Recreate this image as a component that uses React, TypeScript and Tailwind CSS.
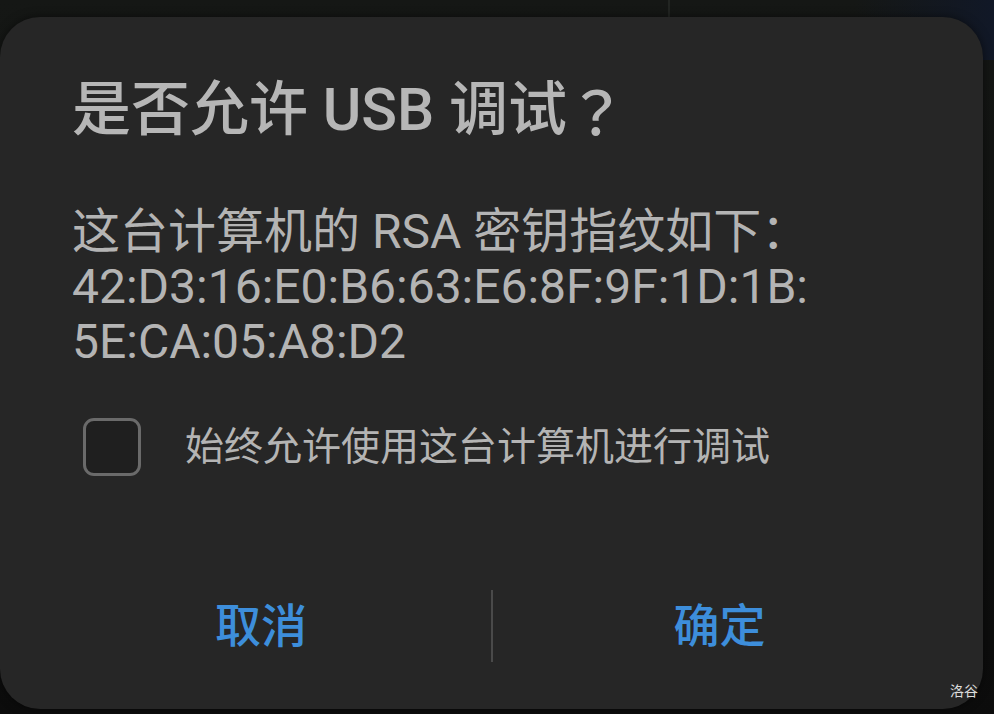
const font = { fontFamily: 'Roboto, "Noto Sans CJK SC", sans-serif' };

function Checkbox() {
  return (
    <div className="w-[58px] h-[58px] shrink-0 rounded-[11px] border-[3px] border-[#6a6a6a] bg-[#1f1f1f]" />
  );
}

export default function App() {
  return (
    <div
      className="relative w-[994px] h-[714px] overflow-hidden bg-gradient-to-b from-[#151715] to-[#0c0c0c] pt-[17px]"
      style={font}
    >
      <div className="absolute left-[668px] top-0 h-[17px] w-[2px] bg-[#222522]" />
      <div className="absolute right-0 top-0 h-[60px] w-[140px] bg-gradient-to-l from-[#111827] to-transparent" />

      <div className="relative flex h-[692px] w-[983px] flex-col rounded-[40px] bg-[#262626] shadow-[0_0_10px_rgba(0,0,0,0.5)]">
        <h1 className="flex h-[64px] items-center pl-[72px] mt-[61px] text-[59px] font-medium leading-[64px] text-[#b6b6b6] whitespace-pre">
          是否允许 USB 调试
          <span className="font-['Noto_Sans_CJK_TC',sans-serif]">？</span>
        </h1>

        <div className="mt-[62px] pl-[72px] text-[48px] leading-[55px] text-[#b4b4b4]">
          <p>这台计算机的 RSA 密钥指纹如下：</p>
          <p>42:D3:16:E0:B6:63:E6:8F:9F:1D:1B:</p>
          <p>5E:CA:05:A8:D2</p>
        </div>

        <label className="mt-[49px] flex items-center gap-[44px] pl-[83px]">
          <Checkbox />
          <span className="text-[39px] leading-[50px] text-[#b4b4b4]">
            始终允许使用这台计算机进行调试
          </span>
        </label>

        <div className="mt-auto mb-[47px] ml-[31px] flex h-[72px] items-center">
          <button className="flex h-full w-[460px] items-center justify-center text-[46px] font-medium text-[#3d8edb]">
            取消
          </button>
          <div className="h-full w-[2px] bg-[#4a4a4a]" />
          <button className="flex h-full w-[453px] items-center justify-center text-[46px] font-medium text-[#3d8edb]">
            确定
          </button>
        </div>

        <span className="absolute right-[5px] bottom-[9px] text-[14px] leading-[18px] text-[#dcdcdc]">
          洛谷
        </span>
      </div>
    </div>
  );
}
